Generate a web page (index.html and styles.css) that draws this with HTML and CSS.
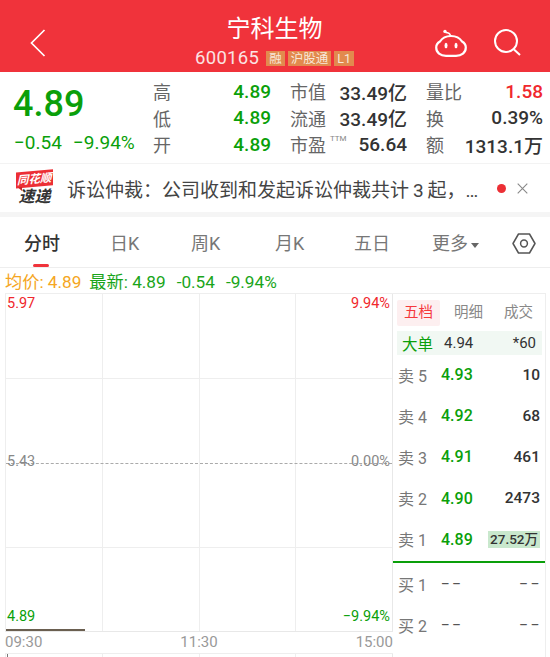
FILE: index.html
```html
<!DOCTYPE html>
<html lang="zh-CN">
<head>
<meta charset="UTF-8">
<meta name="viewport" content="width=device-width, initial-scale=1.0">
<title>宁科生物</title>
<link rel="stylesheet" href="styles.css">
</head>
<body>
<div class="page">
  <!-- Title bar -->
  <header class="topbar">
    <svg class="back-icon" width="16" height="28" viewBox="0 0 16 28"><path d="M14.5 1 L1.5 14 L14.5 27" fill="none" stroke="#fff" stroke-width="1.7"/></svg>
    <div class="title-box">
      <div class="stock-name">宁科生物</div>
      <div class="stock-sub">
        <span class="stock-code">600165</span>
        <span class="tag">融</span>
        <span class="tag">沪股通</span>
        <span class="tag">L1</span>
      </div>
    </div>
    <div class="top-icons">
      <svg width="32" height="28" viewBox="0 0 32 28"><circle cx="10" cy="2.4" r="1.7" fill="#fff"/><path d="M10.5 3.5 Q15 3.5 15.5 7" fill="none" stroke="#fff" stroke-width="1.5"/><path d="M5 12.5 C7.5 8.5 12 7 16 7 C20 7 24.5 8.5 27 12.5 C29.3 13.8 30.8 15.5 30.8 18.5 C30.8 23.8 26.5 26.8 21 26.8 H11 C5.5 26.8 1.2 23.8 1.2 18.5 C1.2 15.5 2.7 13.8 5 12.5 Z" fill="none" stroke="#fff" stroke-width="2.2" stroke-linejoin="round"/><ellipse cx="11" cy="16.5" rx="1.5" ry="2.7" fill="#fff"/><ellipse cx="21" cy="16.5" rx="1.5" ry="2.7" fill="#fff"/></svg>
      <svg width="28" height="27" viewBox="0 0 28 27"><circle cx="12" cy="12" r="11" fill="none" stroke="#fff" stroke-width="2"/><path d="M20 20.5 L26 26" stroke="#fff" stroke-width="2"/></svg>
    </div>
  </header>

  <!-- Quote summary -->
  <section class="quote">
    <div class="price-box">
      <div class="price">4.89</div>
      <div class="change"><span>−0.54</span><span>−9.94%</span></div>
    </div>
    <div class="stats">
      <span class="lbl">高</span><span class="val green">4.89</span><span class="lbl pad">市值</span><span class="val">33.49亿</span><span class="lbl pad">量比</span><span class="val red">1.58</span>
      <span class="lbl">低</span><span class="val green">4.89</span><span class="lbl pad">流通</span><span class="val">33.49亿</span><span class="lbl pad">换</span><span class="val">0.39%</span>
      <span class="lbl">开</span><span class="val green">4.89</span><span class="lbl pad ttm-lbl">市盈<sup class="ttm">TTM</sup></span><span class="val">56.64</span><span class="lbl pad">额</span><span class="val">1313.1万</span>
    </div>
  </section>

  <!-- News strip -->
  <section class="news">
    <div class="logo">
      <span class="logo-top">同花顺</span>
      <span class="logo-bottom">速递</span>
    </div>
    <div class="news-text">诉讼仲裁：公司收到和发起诉讼仲裁共计&thinsp;3&thinsp;起，…</div>
    <span class="news-dot"></span>
    <svg width="11" height="11" viewBox="0 0 11 11"><path d="M.7 .7 L10.3 10.3 M10.3 .7 L.7 10.3" stroke="#888" stroke-width="1.1"/></svg>
  </section>

  <!-- Chart tabs -->
  <nav class="tabs">
    <span class="tab active">分时</span>
    <span class="tab">日K</span>
    <span class="tab">周K</span>
    <span class="tab">月K</span>
    <span class="tab">五日</span>
    <span class="tab">更多<i class="caret"></i></span>
    <svg class="gear" width="24" height="21" viewBox="0 0 24 21"><path d="M6.5 1 H17.5 L23 10.5 L17.5 20 H6.5 L1 10.5 Z" fill="none" stroke="#555" stroke-width="1.5" stroke-linejoin="round"/><circle cx="12" cy="10.5" r="3.4" fill="none" stroke="#555" stroke-width="1.5"/></svg>
  </nav>

  <div class="legend">
    <span class="avg">均价: 4.89</span>
    <span class="latest">最新: <b>4.89</b><b>-0.54</b><b>-9.94%</b></span>
  </div>

  <!-- Chart and order book -->
  <section class="main">
    <div class="chart-col">
      <div class="chart">
        <div class="grid-col"></div><div class="grid-col"></div><div class="grid-col"></div><div class="grid-col"></div>
        <div class="h-line line-1"></div>
        <div class="h-line line-3"></div>
        <div class="mid-line"></div>
        <span class="axis top-l red">5.97</span>
        <span class="axis top-r red">9.94%</span>
        <span class="axis mid-l">5.43</span>
        <span class="axis mid-r">0.00%</span>
        <span class="axis bot-l green">4.89</span>
        <span class="axis bot-r green">−9.94%</span>
        <div class="price-line"></div>
      </div>
      <div class="times"><span>09:30</span><span>11:30</span><span>15:00</span></div>
      <div class="sub-chart">
        <div class="grid-col"></div><div class="grid-col"></div><div class="grid-col"></div><div class="grid-col"></div>
        <span class="vol-tick"></span>
      </div>
    </div>
    <aside class="book">
      <div class="book-tabs"><span class="book-tab active">五档</span><span class="book-tab">明细</span><span class="book-tab">成交</span></div>
      <div class="big-order"><span class="big-lbl">大单</span><span class="big-price">4.94</span><span class="big-vol">*60</span></div>
      <div class="asks">
        <div class="row"><span class="row-lbl">卖 5</span><span class="row-price green">4.93</span><span class="row-vol">10</span></div>
        <div class="row"><span class="row-lbl">卖 4</span><span class="row-price green">4.92</span><span class="row-vol">68</span></div>
        <div class="row"><span class="row-lbl">卖 3</span><span class="row-price green">4.91</span><span class="row-vol">461</span></div>
        <div class="row"><span class="row-lbl">卖 2</span><span class="row-price green">4.90</span><span class="row-vol">2473</span></div>
        <div class="row"><span class="row-lbl">卖 1</span><span class="row-price green">4.89</span><span class="row-vol hl">27.52万</span></div>
      </div>
      <div class="bids">
        <div class="row"><span class="row-lbl">买 1</span><span class="row-price dash">––</span><span class="row-vol dash">––</span></div>
        <div class="row"><span class="row-lbl">买 2</span><span class="row-price dash">––</span><span class="row-vol dash">––</span></div>
      </div>
    </aside>
  </section>
</div>
</body>
</html>
```
FILE: styles.css
```css
html, body {
    margin: 0;
    padding: 0;
    background: #fff;
}

body {
    font-family: Roboto, "Noto Sans CJK SC", sans-serif;
    color: #333;
}

.page {
    width: 550px;
    height: 657px;
    overflow: hidden;
}

.green { color: #0a9f0a; }
.red { color: #f0282d; }

/* Title bar */
.topbar {
    height: 72px;
    background-color: #f0333b;
    color: #fff;
    display: flex;
    align-items: flex-start;
    justify-content: space-between;
    padding: 0 28px 0 30px;
}

.back-icon { margin-top: 29px; }

.title-box {
    text-align: center;
    margin-left: 68px;
}

.stock-name {
    font-size: 24px;
    line-height: 30px;
    margin-top: 14px;
}

.stock-sub {
    display: flex;
    align-items: center;
    gap: 3px;
    height: 28px;
}

.stock-code {
    font-size: 18.5px;
    letter-spacing: 0.3px;
    color: #fbe3e3;
    margin-right: 4px;
}

.tag {
    background-color: #e28a4e;
    color: #f8e8da;
    font-size: 12.5px;
    line-height: 15px;
    padding: 0 3px;
}

.top-icons {
    display: flex;
    align-items: flex-start;
    gap: 27px;
    margin-top: 29px;
}

/* Quote summary */
.quote {
    height: 91px;
    display: flex;
    border-bottom: 1px solid #f3f3f3;
}

.price-box {
    width: 153px;
    padding-left: 13px;
    box-sizing: border-box;
}

.price {
    font-size: 36px;
    font-weight: 500;
    color: #0a9f0a;
    line-height: 44px;
    margin-top: 10px;
}

.change {
    display: flex;
    gap: 11px;
    font-size: 19px;
    color: #0a9f0a;
    line-height: 22px;
    margin-top: 6px;
    margin-left: 1px;
    white-space: nowrap;
}

.stats {
    flex: 1;
    display: grid;
    grid-template-columns: 36px 82px 67px 69px 57px 79px;
    grid-auto-rows: 26.5px;
    align-items: center;
    padding-top: 6px;
    font-size: 19px;
}

.lbl {
    font-size: 18px;
    color: #666;
    white-space: nowrap;
}

.pad { padding-left: 19px; }

.val {
    text-align: right;
    white-space: nowrap;
    font-weight: 500;
}

.ttm-lbl { position: relative; }

.ttm {
    position: absolute;
    left: 59px;
    top: 3px;
    font-size: 8px;
    line-height: 10px;
    color: #888;
}

/* News strip */
.news {
    height: 48px;
    display: flex;
    align-items: center;
    padding: 0 22px 0 15px;
    border-bottom: 5px solid #f5f5f5;
}

.logo {
    width: 39px;
    display: flex;
    flex-direction: column;
    align-items: center;
    margin-right: 13px;
    flex: none;
}

.logo-top {
    background-color: #ec2f35;
    color: #fff;
    font-size: 11.5px;
    line-height: 16px;
    font-weight: 700;
    font-style: italic;
    padding: 0 1px;
    transform: skewY(-5deg);
    white-space: nowrap;
    position: relative;
}

.logo-top::after {
    content: "";
    position: absolute;
    left: 2px;
    top: 15px;
    border-top: 4px solid #c9252b;
    border-left: 4px solid transparent;
}

.logo-bottom {
    font-size: 16px;
    line-height: 19px;
    font-weight: 700;
    font-style: italic;
    color: #333;
}

.news-text {
    flex: 1;
    font-size: 19px;
    color: #444;
    white-space: nowrap;
    overflow: hidden;
}

.news-dot {
    width: 9px;
    height: 9px;
    border-radius: 50%;
    background-color: #ec2f35;
    margin-right: 11px;
    flex: none;
}

/* Chart tabs */
.tabs {
    height: 50px;
    position: relative;
    font-size: 18px;
    color: #777;
    border-bottom: 1px solid #eee;
}

.tab {
    position: absolute;
    top: 15px;
    line-height: 24px;
    white-space: nowrap;
}

.tab:nth-child(1) { left: 24px; }
.tab:nth-child(2) { left: 110px; }
.tab:nth-child(3) { left: 191px; }
.tab:nth-child(4) { left: 275px; }
.tab:nth-child(5) { left: 354px; }
.tab:nth-child(6) { left: 432px; }

.tab.active {
    color: #333;
    font-weight: 500;
}

.tab.active::after {
    content: "";
    position: absolute;
    left: 9px;
    top: 32px;
    width: 16px;
    height: 3px;
    border-radius: 2px;
    background-color: #f0333b;
}

.caret {
    display: inline-block;
    margin-left: 3px;
    vertical-align: 2px;
    border-left: 4px solid transparent;
    border-right: 4px solid transparent;
    border-top: 5px solid #666;
}

.gear {
    position: absolute;
    left: 512px;
    top: 16px;
}

.legend {
    height: 25px;
    display: flex;
    align-items: center;
    gap: 8px;
    padding-left: 5px;
    font-size: 17.2px;
}

.avg { color: #f5a623; }
.latest { color: #1aa51a; }
.latest b { font-weight: 400; margin-right: 11px; }

/* Chart and order book */
.main {
    display: flex;
    margin: 0 4px 0 5px;
    border-top: 1px solid #eee;
}

.chart-col {
    width: 388px;
    flex: none;
}

.chart {
    height: 337px;
    display: flex;
    position: relative;
    border-bottom: 1px solid #e8e8e8;
    border-left: 1px solid #eee;
    border-right: 1px solid #e8e8e8;
}

.grid-col {
    flex: 1;
    border-right: 1px solid #eee;
}

.grid-col:nth-child(4) { border-right: none; }

.h-line {
    position: absolute;
    left: 0;
    right: 0;
    border-top: 1px solid #eee;
}

.line-1 { top: 84px; }
.line-3 { top: 253px; }

.mid-line {
    position: absolute;
    left: 0;
    right: 0;
    top: 169px;
    border-top: 1px dashed #aaa;
}

.axis {
    position: absolute;
    font-size: 14.5px;
    line-height: 16px;
}

.top-l { left: 1px; top: 2px; }
.top-r { right: 2px; top: 2px; }
.mid-l { left: 1px; top: 160px; color: #888; }
.mid-r { right: 2px; top: 160px; color: #888; }
.bot-l { left: 1px; top: 315px; }
.bot-r { right: 2px; top: 315px; }

.price-line {
    position: absolute;
    left: 0;
    bottom: 0;
    width: 79px;
    height: 2px;
    background-color: #6a5f50;
}

.times {
    display: flex;
    justify-content: space-between;
    font-size: 15px;
    color: #999;
    line-height: 21px;
    border-bottom: 1px solid #eee;
}

.sub-chart {
    height: 10px;
    display: flex;
    position: relative;
    border-left: 1px solid #eee;
    border-right: 1px solid #e8e8e8;
}

.vol-tick {
    position: absolute;
    left: 1px;
    top: 0;
    width: 1px;
    height: 4px;
    background-color: #777;
}

.book {
    flex: 1;
    font-size: 16px;
    border-right: 1px solid #eee;
}

.book-tabs {
    display: flex;
    align-items: center;
    height: 37px;
    padding-left: 4px;
    font-size: 14.5px;
    color: #888;
    gap: 2px;
}

.book-tab {
    width: 43px;
    text-align: center;
    line-height: 26px;
    margin-right: 5px;
}

.book-tab.active {
    color: #f5383c;
    background-color: #fdeff0;
    border-radius: 2px;
}

.big-order {
    margin: 0 3px 0 4px;
    height: 24px;
    background-color: #f1f8f3;
    display: flex;
    align-items: center;
    padding: 0 6px 0 5px;
    font-size: 15.5px;
}

.big-lbl { color: #0a9f0a; width: 42px; }
.big-price { font-size: 15px; }
.big-vol { margin-left: auto; font-size: 15px; }

.asks {
    border-bottom: 2px solid #0a9f0a;
    padding-bottom: 1px;
    margin-top: -1px;
}

.row {
    height: 41.2px;
    display: flex;
    align-items: center;
    padding: 0 5px 0 5px;
}

.row-lbl { width: 43px; color: #777; }
.row-price { font-weight: 500; }
.row-vol { margin-left: auto; font-size: 15.5px; font-weight: 500; }

.dash {
    font-size: 13px;
    font-weight: 500;
    letter-spacing: 3px;
    color: #555;
}

.row-vol.dash { margin-right: -2px; font-size: 13px; font-weight: 500; }

.hl {
    background-color: #c9e8cd;
    font-size: 13.5px;
    padding: 0 2px;
    line-height: 17px;
}
```
